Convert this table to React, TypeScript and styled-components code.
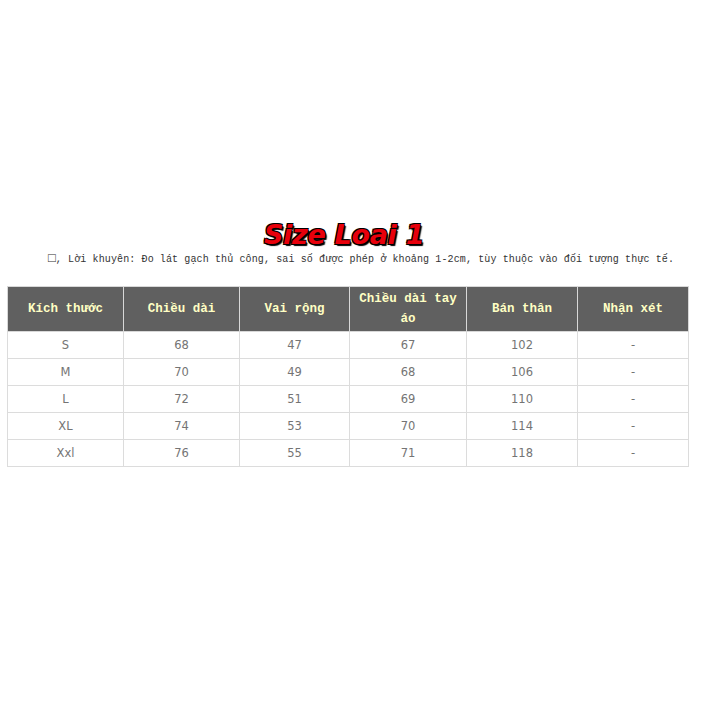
import React from "react";
import styled, { createGlobalStyle } from "styled-components";

const GlobalStyle = createGlobalStyle`
    body {
        margin: 0;
        background: #fff;
    }
`;

const Page = styled.div`
    width: 708px;
    height: 708px;
    display: flex;
    flex-direction: column;
    align-items: flex-start;
    padding-top: 219px;
    box-sizing: border-box;
`;

const Title = styled.h2`
    align-self: stretch;
    margin: 0;
    padding-right: 20px;
    text-align: center;
    font-family: "DejaVu Sans", sans-serif;
    font-weight: bold;
    font-style: italic;
    font-size: 27px;
    line-height: 32px;
    letter-spacing: -0.3px;
    color: #e8000b;
    text-shadow: -1px -1px 0 #000, 1px -1px 0 #000, -1px 1px 0 #000, 1px 1px 0 #000, 2px 2px 1px #000;
`;

const Note = styled.p`
    margin: 1px 0 0 48px;
    font-family: "Liberation Mono", monospace;
    font-size: 10px;
    letter-spacing: 0.12px;
    line-height: 16px;
    height: 16px;
    color: #333;
    white-space: nowrap;
`;

const Box = styled.span`
    font-size: 13px;
    line-height: 10px;
    letter-spacing: 0;
`;

const Table = styled.table`
    margin: 18px 0 0 7px;
    width: 681px;
    border-collapse: collapse;
    table-layout: fixed;
`;

const Head = styled.th<{ $w: number }>`
    width: ${(p) => p.$w}px;
    height: 43px;
    box-sizing: border-box;
    padding: 2px 4px;
    background: #606060;
    border: 1px solid #d8d8d8;
    color: #ffffc4;
    font-family: "Liberation Mono", monospace;
    font-weight: bold;
    font-size: 12.5px;
    line-height: 20px;
    text-align: center;
    vertical-align: middle;
`;

const Cell = styled.td`
    height: 27px;
    box-sizing: border-box;
    padding: 0 4px;
    border: 1px solid #dcdcdc;
    color: #747474;
    font-family: "DejaVu Sans", sans-serif;
    font-size: 11.5px;
    text-align: center;
    vertical-align: middle;
`;

const columns = [
    { label: "Kích thước", w: 116 },
    { label: "Chiều dài", w: 116 },
    { label: "Vai rộng", w: 110 },
    { label: "Chiều dài tay áo", w: 117 },
    { label: "Bán thân", w: 111 },
    { label: "Nhận xét", w: 111 },
];

const rows = [
    ["S", "68", "47", "67", "102", "-"],
    ["M", "70", "49", "68", "106", "-"],
    ["L", "72", "51", "69", "110", "-"],
    ["XL", "74", "53", "70", "114", "-"],
    ["Xxl", "76", "55", "71", "118", "-"],
];

export default function App() {
    return (
        <>
            <GlobalStyle />
            <Page>
                <Title>Size Loai 1</Title>
                <Note>
                    <Box>□</Box>, Lời khuyên: Đo lát gạch thủ công, sai số được phép ở khoảng 1-2cm, tùy thuộc vào đối tượng thực tế.
                </Note>
                <Table>
                    <thead>
                        <tr>
                            {columns.map((c) => (
                                <Head key={c.label} $w={c.w}>{c.label}</Head>
                            ))}
                        </tr>
                    </thead>
                    <tbody>
                        {rows.map((r) => (
                            <tr key={r[0]}>
                                {r.map((v, i) => (
                                    <Cell key={i}>{v}</Cell>
                                ))}
                            </tr>
                        ))}
                    </tbody>
                </Table>
            </Page>
        </>
    );
}
